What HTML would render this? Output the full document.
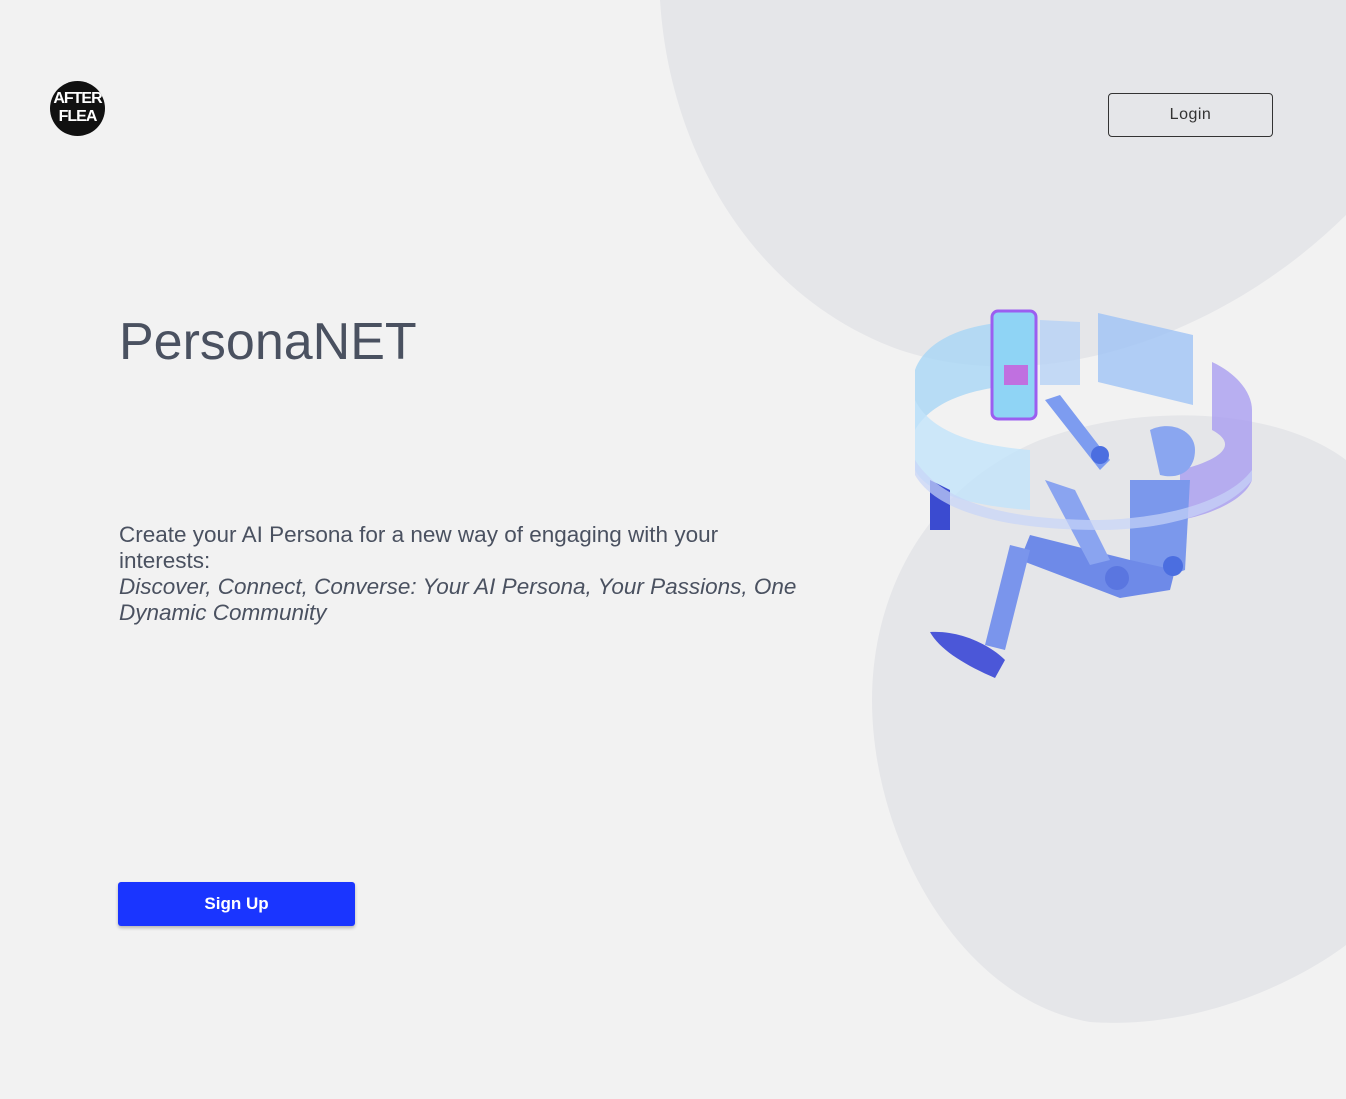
<!DOCTYPE html>
<html><head><meta charset="utf-8"><style>
html,body{margin:0;padding:0;width:1346px;height:1099px;overflow:hidden;background:#f2f2f2;font-family:"Liberation Sans",sans-serif;}
.bg{position:absolute;left:0;top:0}
.logo{position:absolute;left:50px;top:81px;width:55px;height:55px;border-radius:50%;background:#111;color:#fff;font-weight:bold;font-size:16px;line-height:18px;text-align:center;overflow:hidden}
.logo span{display:block;letter-spacing:-1px}
.login{position:absolute;left:1108px;top:93px;width:165px;height:44px;border:1px solid #333;border-radius:4px;box-sizing:border-box;text-align:center;line-height:42px;font-size:16px;color:#333;letter-spacing:0.5px}
h1{position:absolute;left:119px;top:312px;margin:0;font-weight:normal;font-size:52px;color:#4a5160}
.p{position:absolute;left:119px;top:522px;width:690px;font-size:22.5px;line-height:26px;color:#4a5160}
.p i{display:block}
.su{position:absolute;left:118px;top:882px;width:237px;height:44px;background:#1a35ff;color:#fff;border-radius:3px;text-align:center;line-height:44px;font-size:17px;font-weight:bold;box-shadow:0 2px 3px rgba(0,0,0,.25)}
</style></head><body>
<svg class="bg" width="1346" height="1099">
<path d="M660 0 C670 160 760 300 900 350 C1050 400 1230 330 1346 215 L1346 0 Z" fill="#e5e6e9"/>
<path d="M1346 460 C1280 410 1150 400 1040 440 C920 490 872 600 872 700 C872 840 960 1000 1090 1022 C1200 1030 1300 980 1346 945 Z" fill="#e5e6e9"/>
<path d="M915 370 C930 330 990 320 1030 322 L1030 385 C990 385 935 395 915 430 Z" fill="#a8d6f5" opacity=".8"/>
<path d="M915 380 L915 470 C925 490 960 505 1030 510 L1030 450 C970 445 930 430 915 400Z" fill="#c2e4fa" opacity=".8"/>
<path d="M1098 313 L1193 335 L1193 405 L1098 382Z" fill="#9fc3f5" opacity=".8"/>
<path d="M1040 320 L1080 322 L1080 385 L1040 385Z" fill="#b6d2f5" opacity=".8"/>
<path d="M1212 362 C1240 375 1252 395 1252 410 L1252 480 C1245 500 1210 515 1180 520 L1180 470 C1220 460 1240 445 1212 430Z" fill="#a99ef0" opacity=".8"/>
<rect x="992" y="311" width="44" height="108" rx="6" fill="#8fd4f5" stroke="#9b5ef0" stroke-width="3"/>
<rect x="1004" y="365" width="24" height="20" fill="#c070e0"/>
<path d="M1045 400 L1060 395 L1110 460 L1100 470Z" fill="#7d9cf0"/>
<circle cx="1100" cy="455" r="9" fill="#4b6ee0"/>
<path d="M1150 430 C1170 420 1195 430 1195 450 C1195 470 1180 480 1160 475 Z" fill="#8aa6f0"/>
<path d="M1130 480 L1190 480 L1185 570 L1130 590 Z" fill="#7b98ec"/>
<path d="M1030 535 L1130 560 L1175 570 L1170 590 L1120 598 L1020 560 Z" fill="#6e8ae8"/>
<circle cx="1117" cy="578" r="12" fill="#5a76e0"/>
<circle cx="1173" cy="566" r="10" fill="#4b6ee0"/>
<path d="M1045 480 L1075 490 L1110 560 L1090 565Z" fill="#8aa4f0"/>
<path d="M1010 545 L1030 550 L1005 650 L985 645Z" fill="#7a95ec"/>
<path d="M930 632 C960 630 990 645 1005 660 L995 678 C965 665 940 650 930 632Z" fill="#4b57d8"/>
<path d="M930 480 L950 490 L950 530 L930 530Z" fill="#3b4bd0"/>
<path d="M915 460 C940 500 1000 520 1100 520 C1170 518 1230 500 1252 470 L1252 480 C1230 510 1170 530 1100 530 C1000 530 935 510 915 475Z" fill="#c8d4f8" opacity=".7"/>
</svg>
<div class="logo"><span style="margin-top:9px">AFTER</span><span>FLEA</span></div>
<div class="login">Login</div>
<h1>PersonaNET</h1>
<div class="p">Create your AI Persona for a new way of engaging with your interests:<i>Discover, Connect, Converse: Your AI Persona, Your Passions, One Dynamic Community</i></div>
<div class="su">Sign Up</div>
</body></html>
